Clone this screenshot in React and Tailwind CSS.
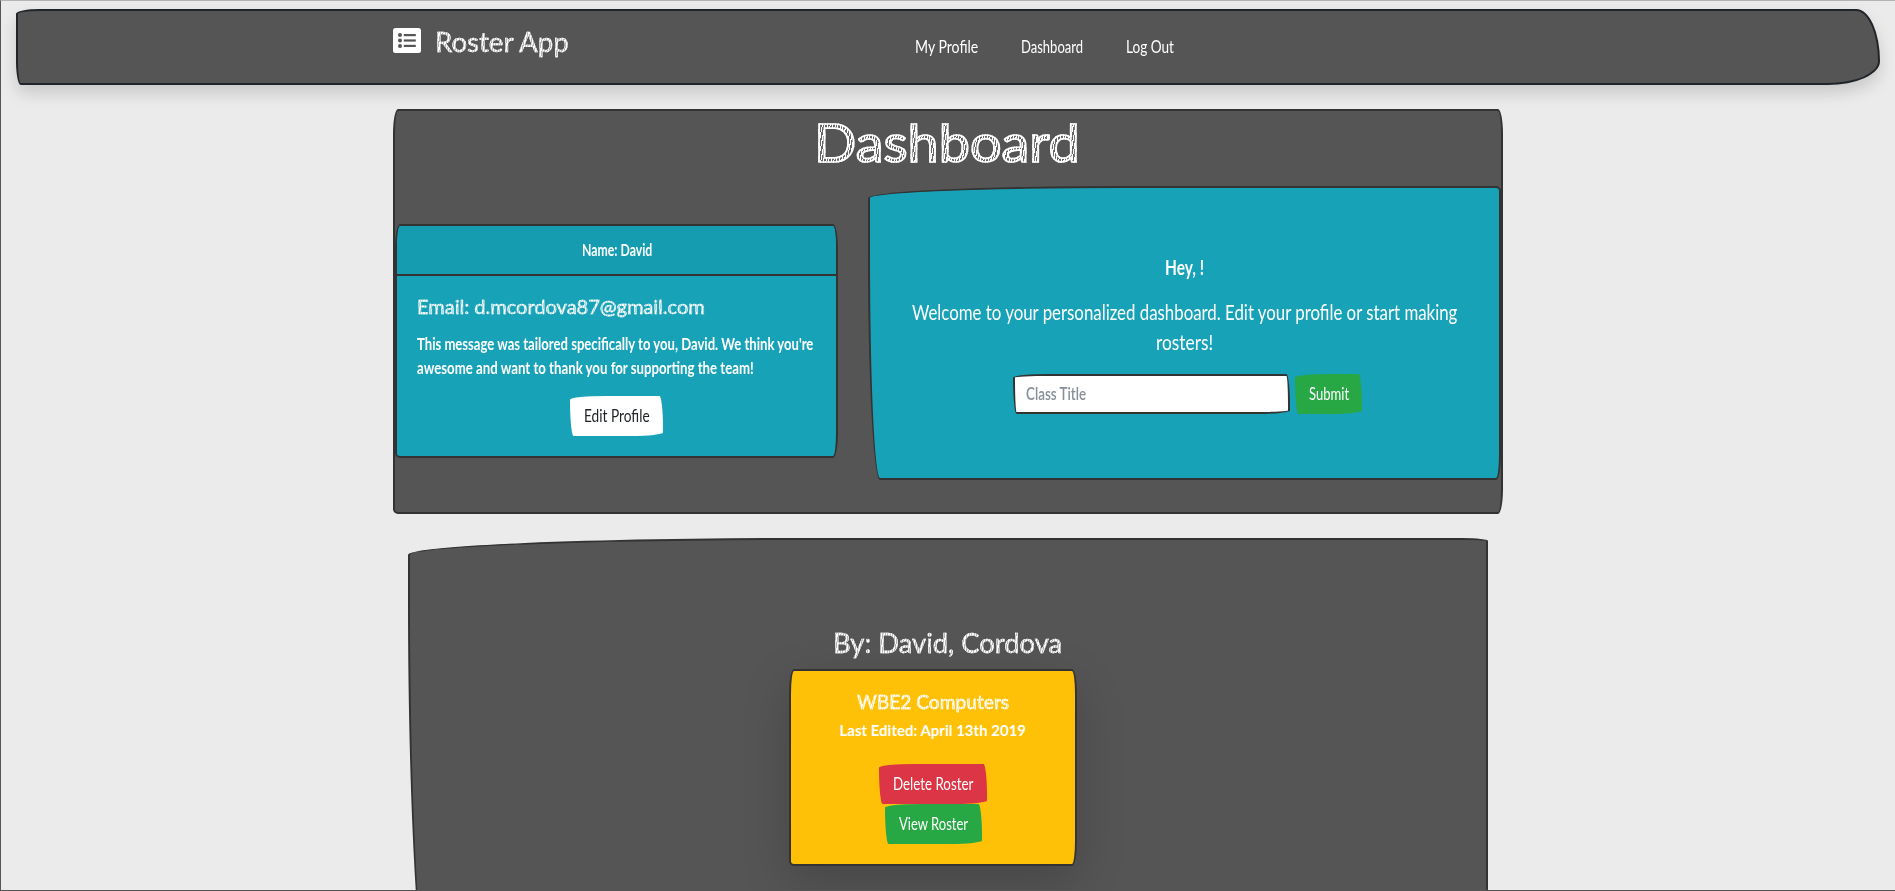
import { useLayoutEffect, useRef } from "react";

// Condenses or widens one line of text so that it fills the width of its box.
function Fit({ className = "", children }) {
  const outer = useRef(null);
  const inner = useRef(null);
  useLayoutEffect(() => {
    const s = outer.current.clientWidth / inner.current.offsetWidth;
    inner.current.style.transform = `scaleX(${s})`;
  }, []);
  return (
    <span ref={outer} className={`block whitespace-nowrap ${className}`}>
      <span ref={inner} className="inline-block origin-left">{children}</span>
    </span>
  );
}

// Chalk-like lettering: hatched fill inside a thin white outline.
function Chalk({ children }) {
  return (
    <span className="bg-[repeating-linear-gradient(100deg,#fff_0_1.4px,#ffffff90_1.4px_2.4px)] bg-clip-text text-transparent [-webkit-text-stroke:0.4px_#ffffffc0]">
      {children}
    </span>
  );
}

const btn = "flex h-10 items-center justify-center rounded-[255px_25px_225px_25px/25px_225px_25px_255px] pb-px text-[17px] leading-6";
const sketch = "font-['Lato',sans-serif]";

function ListIcon() {
  return (
    <svg viewBox="0 0 28 25" className="h-[25px] w-[28px]">
      <rect width="28" height="25" rx="2.5" fill="#fff" />
      <g fill="#555">
        <circle cx="7" cy="7" r="2" />
        <circle cx="7" cy="12.5" r="2" />
        <circle cx="7" cy="18" r="2" />
        <rect x="10.8" y="6" width="12" height="2.2" />
        <rect x="10.8" y="11.4" width="12" height="2.2" />
        <rect x="10.8" y="16.8" width="12" height="2.2" />
      </g>
    </svg>
  );
}

export default function App() {
  return (
    <div className="h-[891px] overflow-hidden border-b border-l border-t border-b-[#555] border-l-[#555] border-t-[#b3b3b3] bg-[#ebebeb] font-['Lato',sans-serif] text-white">
      <nav className="mx-[15px] mt-2 flex h-[76px] rounded-[25px_25px_55px_5px/5px_55px_25px_25px] border-2 border-[#212529] bg-[#555] pl-[375px] shadow-[0_8px_16px_rgba(0,0,0,0.15)]">
        <div className="flex w-[522px] gap-[14px]">
          <div className="pt-[17px]"><ListIcon /></div>
          <Fit className={`mt-[13px] w-[134px] text-[27px] leading-9 ${sketch}`}><Chalk>Roster App</Chalk></Fit>
        </div>
        <div className="flex gap-[43px] pt-[24px] text-[17px] leading-6">
          <Fit className="w-[63px]">My Profile</Fit>
          <Fit className="w-[62px]">Dashboard</Fit>
          <Fit className="w-[48px]">Log Out</Fit>
        </div>
      </nav>

      <main className="ml-[392px] mt-6 h-[405px] w-[1110px] rounded-[5px_5px_5px_5px/25px_25px_25px_5px] border-2 border-[#333] bg-[#555]">
        <h1 className={`ml-[419px] mt-[-2px] w-[266px] text-[52px] leading-[66px] ${sketch}`}>
          <Fit className="w-[266px]">
            <span className="bg-[repeating-linear-gradient(100deg,#fff_0_1px,#666_1px_2.4px)] bg-clip-text text-transparent [-webkit-text-stroke:1.7px_white]">Dashboard</span>
          </Fit>
        </h1>
        <div className="mt-[11px] flex">
          <section className="mt-[38px] h-[234px] w-[443px] rounded-[5px_5px_5px_5px/25px_25px_25px_5px] border-2 border-[#333] bg-[#17a2b8]">
            <header className="flex h-[50px] justify-center rounded-[3px_3px_0_0/23px_23px_0_0] border-b-2 border-[#333] bg-[#169cb1] pt-[12px] text-[17px] font-bold leading-6">
              <Fit className="w-[70px]">Name: David</Fit>
            </header>
            <div className="px-[20px] pt-[18px]">
              <Fit className={`w-[288px] text-[20px] leading-6 ${sketch}`}><Chalk>Email: d.mcordova87@gmail.com</Chalk></Fit>
              <div className="mt-[14px] text-[17px] font-bold leading-6">
                <Fit className="w-[396px]">This message was tailored specifically to you, David. We think you're</Fit>
                <Fit className="w-[337px]">awesome and want to thank you for supporting the team!</Fit>
              </div>
              <button className={`${btn} ml-[153px] mt-[16px] w-[93px] bg-white text-[#212529]`}>
                <Fit className="w-[66px]">Edit Profile</Fit>
              </button>
            </div>
          </section>
          <section className="ml-[30px] h-[294px] w-[633px] rounded-[255px_5px_5px_12px/12px_5px_25px_225px] border-2 border-[#333] bg-[#17a2b8] pt-[64px] text-[21px]">
            <Fit className="ml-[295px] w-[39px] font-bold leading-[30px]">Hey, !</Fit>
            <div className="mt-[15px] leading-[30px]">
              <Fit className="ml-[42px] w-[545px]">Welcome to your personalized dashboard. Edit your profile or start making</Fit>
              <Fit className="ml-[286px] w-[57px]">rosters!</Fit>
            </div>
            <div className="ml-[143px] mt-[17px] flex gap-[5px]">
              <div className="flex h-10 w-[277px] items-center rounded-[255px_25px_225px_25px/25px_225px_25px_255px] border-2 border-[#333] bg-white pb-px pl-[11px] text-[17px] leading-6 text-[#868e96]">
                <Fit className="w-[60px] font-semibold">Class Title</Fit>
              </div>
              <button className={`${btn} w-[67px] bg-[#28a745]`}><Fit className="w-[40px]">Submit</Fit></button>
            </div>
          </section>
        </div>
      </main>

      <section className="ml-[407px] mt-6 h-[482px] w-[1080px] rounded-[400px_25px_225px_28px/17px_3px_25px_420px] border-2 border-[#333] bg-[#555] pt-[85px]">
        <Fit className={`ml-[423px] w-[229px] text-[27px] leading-9 ${sketch}`}><Chalk>By: David, Cordova</Chalk></Fit>
        <article className="ml-[379px] mt-[8px] flex h-[197px] w-[288px] flex-col items-center rounded-[5px_5px_5px_5px/25px_25px_25px_5px] border-2 border-[#333] bg-[#ffc107] pt-[18px] shadow-[0_16px_48px_rgba(0,0,0,0.175)]">
          <Fit className={`w-[152px] text-[20px] font-medium leading-6 ${sketch}`}><Chalk>WBE2 Computers</Chalk></Fit>
          <Fit className={`mt-[7px] w-[187px] text-[15px] font-bold leading-5 ${sketch}`}>Last Edited: April 13th 2019</Fit>
          <button className={`${btn} mt-[24px] w-[108px] bg-[#dc3545]`}><Fit className="w-[80px]">Delete Roster</Fit></button>
          <button className={`${btn} w-[97px] bg-[#28a745]`}><Fit className="w-[69px]">View Roster</Fit></button>
        </article>
      </section>
    </div>
  );
}
